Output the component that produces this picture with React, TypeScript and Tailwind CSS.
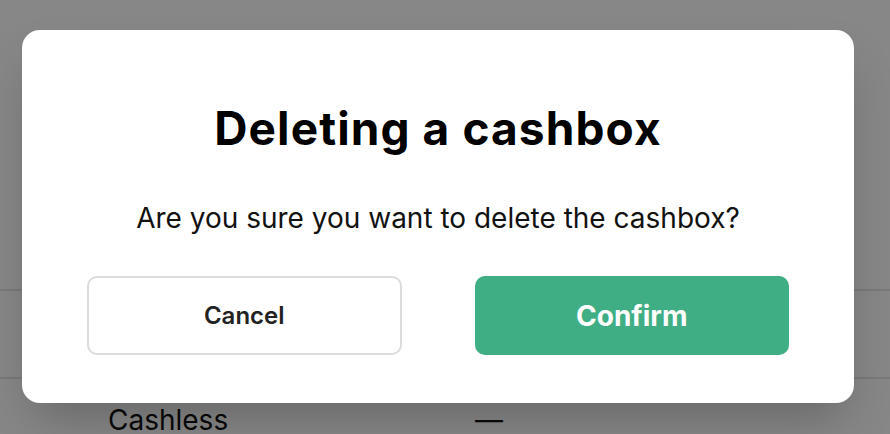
export default function App() {
  return (
    <div
      className="relative h-[434px] w-full overflow-hidden bg-white"
      style={{ fontFamily: "Inter, 'Noto Sans', sans-serif" }}
    >
      {/* page behind the overlay */}
      <div className="pt-[289px]">
        <div className="h-[88px] border-t-2 border-[#e4e4e4]" />
        <div className="flex border-t-2 border-[#e4e4e4] pt-[20px] text-[28px] text-[#111]">
          <span className="w-[475px] pl-[108px]">Cashless</span>
          <span>—</span>
        </div>
      </div>

      {/* overlay + dialog */}
      <div className="absolute inset-0 flex items-center justify-center bg-[rgba(0,0,0,0.47)] pb-[1px] pr-[14px]">
        <div className="w-[832px] rounded-[18px] bg-white px-[65px] pb-[48px] pt-[70px] shadow-2xl">
          <h2 className="text-center text-[46px] font-bold leading-[56px] tracking-[1.1px] text-black">
            Deleting a cashbox
          </h2>
          <p className="mt-[45px] text-center text-[28px] leading-[34px] text-[#111]">
            Are you sure you want to delete the cashbox?
          </p>
          <div className="mt-[41px] grid grid-cols-2 gap-[73px]">
            <button className="h-[79px] rounded-[10px] border-2 border-[#dcdcdc] bg-white text-[24px] font-semibold text-[#222]">
              Cancel
            </button>
            <button className="h-[79px] rounded-[10px] bg-[#3fae84] text-[28px] font-bold text-white">
              Confirm
            </button>
          </div>
        </div>
      </div>
    </div>
  );
}
